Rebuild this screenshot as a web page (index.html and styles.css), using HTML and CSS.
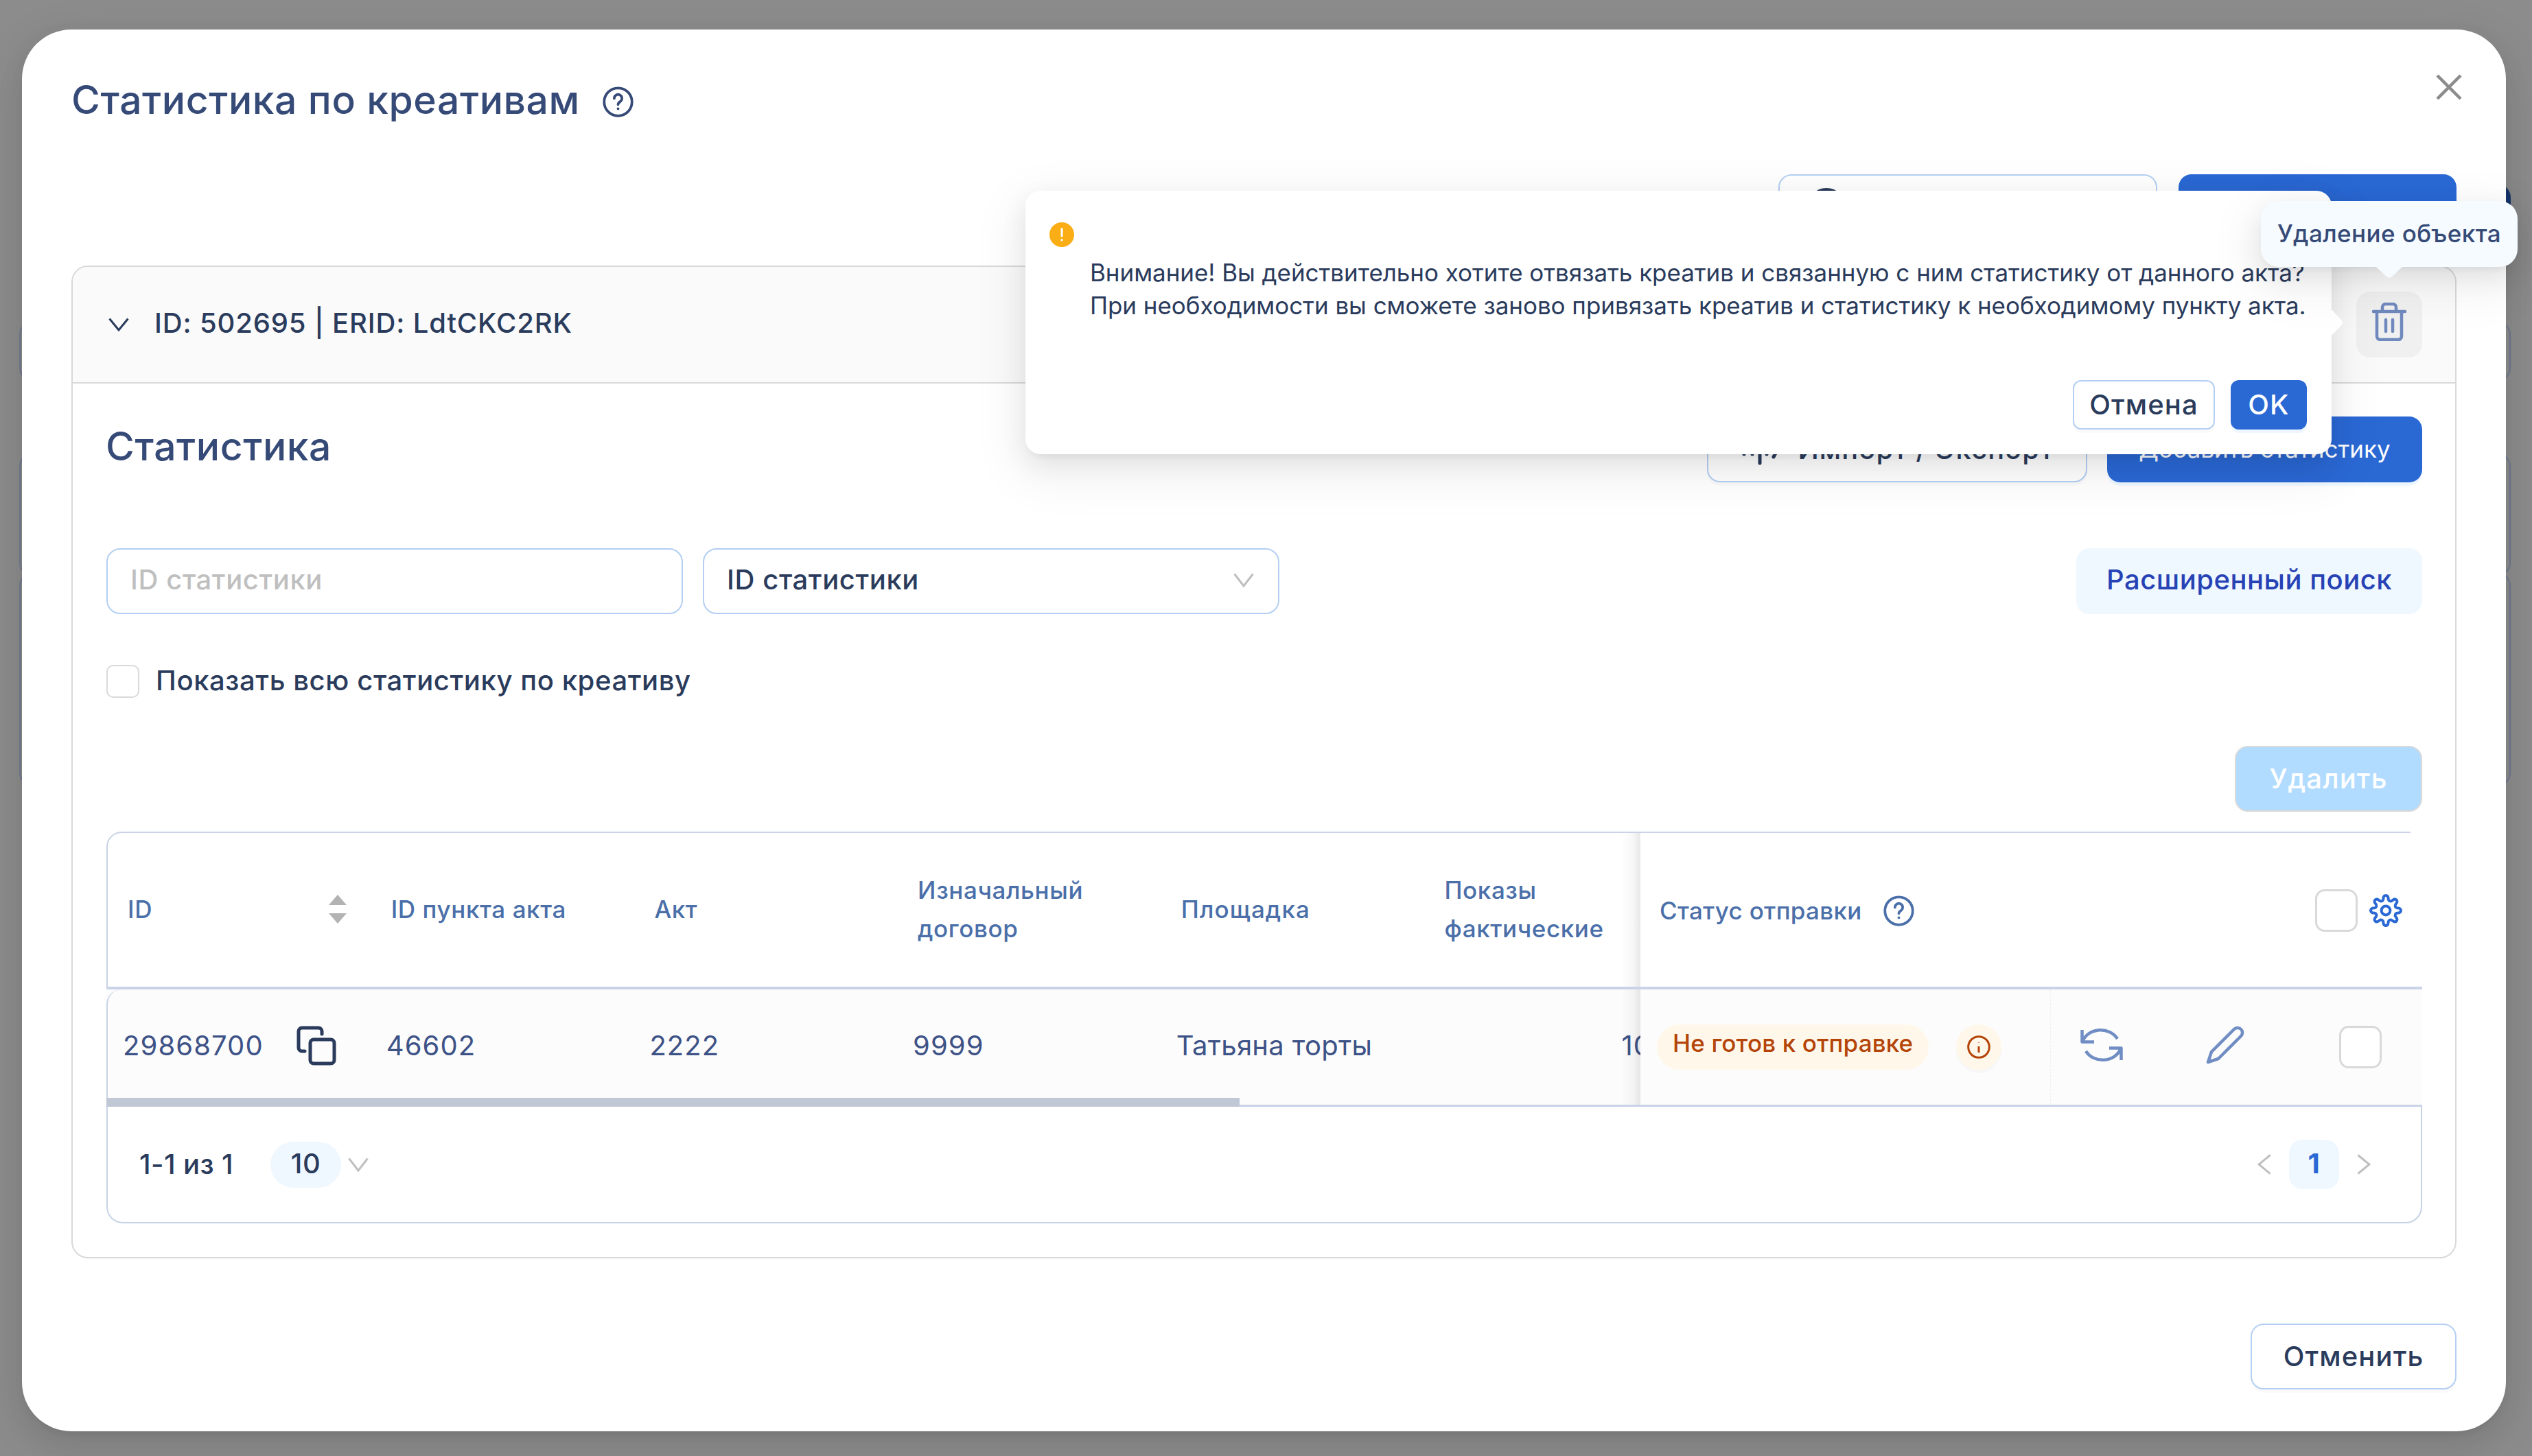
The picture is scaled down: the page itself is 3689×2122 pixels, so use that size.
FILE: index.html
```html
<!DOCTYPE html>
<html lang="ru">
<head>
  <meta charset="UTF-8">
  <meta name="viewport" content="width=device-width, initial-scale=1.0">
  <title>Статистика по креативам</title>
  <link rel="stylesheet" href="styles.css">
</head>
<body>
  <!-- затемнённая страница под окном -->
  <div class="page-behind">
    <div class="behind-box search"></div>
    <div class="behind-box table"></div>
    <div class="behind-box list"></div>
    <div class="behind-btn"></div>
  </div>

  <main class="modal">
    <button class="close">
      <svg width="38" height="38" viewBox="0 0 38 38"><path d="M2 2 36 36M36 2 2 36"/></svg>
    </button>

    <header class="modal-title">
      <h1>Статистика по креативам</h1>
      <svg class="help" width="45" height="45" viewBox="0 0 24 24">
        <circle cx="12" cy="12" r="10.8"/>
        <path d="M9 9.3a3 3 0 1 1 4.6 2.5c-1 .7-1.6 1.2-1.6 2.2"/>
        <path d="M12 17.2v.1"/>
      </svg>
    </header>

    <div class="actions">
      <button class="btn outline act-first">
        <svg width="56" height="56" viewBox="0 0 56 56"><circle cx="28" cy="28" r="25.5"/></svg>
      </button>
      <button class="btn primary act-second"></button>
    </div>

    <section class="card">
      <div class="card-head">
        <svg class="chevron dark" width="30" height="20" viewBox="0 0 30 20"><path d="M1.5 1.5 15 18 28.5 1.5"/></svg>
        <span class="card-name">ID: 502695 | ERID: LdtCKC2RK</span>
        <button class="trash">
          <svg width="50" height="56" viewBox="0 0 50 56">
            <path d="M2 13H48M7 13V49a5 5 0 0 0 5 5H38a5 5 0 0 0 5-5V13M15 13V7a5 5 0 0 1 5-5H30a5 5 0 0 1 5 5V13M20 25V42M30 25V42"/>
          </svg>
        </button>
      </div>

      <div class="card-body">
        <div class="stat-head">
          <h2>Статистика</h2>
          <button class="btn outline import">
            <svg width="58" height="48" viewBox="0 0 58 48"><path d="M5 14V31M17 22V31M28 4V44M38 22V31M55 22 48 35"/></svg>
            <span>Импорт / Экспорт</span>
          </button>
          <button class="btn primary add"><span>Добавить статистику</span></button>
        </div>

        <div class="filters">
          <div class="field placeholder"><span>ID статистики</span></div>
          <div class="field">
            <span>ID статистики</span>
            <svg class="chevron" width="30" height="21" viewBox="0 0 30 21"><path d="M1.5 1.5 15 19 28.5 1.5"/></svg>
          </div>
          <button class="btn soft"><span>Расширенный поиск</span></button>
        </div>

        <label class="show-all">
          <span class="check small"></span>
          <span class="show-all-text">Показать всю статистику по креативу</span>
        </label>

        <div class="bulk">
          <button class="btn disabled"><span>Удалить</span></button>
        </div>

        <div class="grid">
          <div class="row head">
            <div class="cells">
              <div class="cell">
                <span>ID</span>
                <svg class="sorter" width="26" height="42" viewBox="0 0 26 42"><path d="M13 0 26 15H0zM13 42 26 27H0z"/></svg>
              </div>
              <div class="cell">ID пункта акта</div>
              <div class="cell">Акт</div>
              <div class="cell"><span>Изначальный<br>договор</span></div>
              <div class="cell place">Площадка</div>
              <div class="cell"><span>Показы<br>фактические</span></div>
            </div>
            <div class="pinned">
              <div class="status">
                <span>Статус отправки</span>
                <svg class="help" width="45" height="45" viewBox="0 0 24 24">
                  <circle cx="12" cy="12" r="10.8"/>
                  <path d="M9 9.3a3 3 0 1 1 4.6 2.5c-1 .7-1.6 1.2-1.6 2.2"/>
                  <path d="M12 17.2v.1"/>
                </svg>
              </div>
              <div class="head-tools">
                <span class="check"></span>
                <svg class="gear" width="48" height="48" viewBox="0 0 24 24">
                  <path d="M10.300 2.700a1.700 1.700 0 0 1 3.400 0l.2 1.200a1.600 1.600 0 0 0 2.500 1l1-.7a1.700 1.700 0 0 1 2.400 2.400l-.7 1a1.600 1.600 0 0 0 1 2.500l1.200.2a1.700 1.700 0 0 1 0 3.400l-1.200.2a1.600 1.600 0 0 0-1 2.500l.7 1a1.700 1.700 0 0 1-2.400 2.400l-1-.7a1.600 1.600 0 0 0-2.500 1l-.2 1.200a1.700 1.700 0 0 1-3.400 0l-.2-1.200a1.600 1.600 0 0 0-2.500-1l-1 .7a1.700 1.700 0 0 1-2.400-2.400l.7-1a1.600 1.600 0 0 0-1-2.500l-1.200-.2a1.700 1.700 0 0 1 0-3.400l1.200-.2a1.600 1.600 0 0 0 1-2.500l-.7-1a1.700 1.700 0 0 1 2.400-2.400l1 .7a1.600 1.600 0 0 0 2.500-1z"/>
                  <circle cx="12" cy="12" r="3.2"/>
                </svg>
              </div>
            </div>
          </div>

          <div class="row data">
            <div class="cells">
              <div class="cell">
                <span>29868700</span>
                <svg class="copy" width="58" height="58" viewBox="0 0 58 58">
                  <path d="M12 37H8a5 5 0 0 1-5-5V8a5 5 0 0 1 5-5H32a5 5 0 0 1 5 5V12"/>
                  <rect x="20" y="20" width="35" height="35" rx="5"/>
                </svg>
              </div>
              <div class="cell">46602</div>
              <div class="cell">2222</div>
              <div class="cell">9999</div>
              <div class="cell place">Татьяна торты</div>
              <div class="cell shows">10</div>
            </div>
            <div class="pinned">
              <div class="status">
                <span class="tag">Не готов к отправке</span>
                <button class="info">
                  <svg width="34" height="34" viewBox="0 0 34 34"><circle cx="17" cy="17" r="15.3"/><path d="M17 16V25M17 10V10.5"/></svg>
                </button>
              </div>
              <div class="tool refresh">
                <svg width="62" height="52" viewBox="0 0 62 52">
                  <path d="M2.5 4V21.5H20M3.500 20A28 25 0 0 1 54 17"/>
                  <path d="M59.5 48V30.5H42M58.500 32A28 25 0 0 1 8 35"/>
                </svg>
              </div>
              <div class="tool edit">
                <svg width="56" height="56" viewBox="0 0 56 56"><path d="M41 5a7 7 0 0 1 10 10L18 48 3 53 8 38z"/></svg>
              </div>
              <div class="tool pick"><span class="check"></span></div>
            </div>
          </div>
          <div class="scrollbar"></div>

          <div class="pager">
            <span class="total">1-1 из 1</span>
            <span class="size">10</span>
            <svg class="chevron" width="30" height="21" viewBox="0 0 30 21"><path d="M1.5 1.5 15 19 28.5 1.5"/></svg>
            <div class="pages">
              <svg class="chevron" width="20" height="30" viewBox="0 0 20 30"><path d="M18.5 1.5 2 15 18.5 28.5"/></svg>
              <span class="page">1</span>
              <svg class="chevron" width="20" height="30" viewBox="0 0 20 30"><path d="M1.5 1.5 18 15 1.5 28.5"/></svg>
            </div>
          </div>
        </div>
      </div>
    </section>

    <footer class="modal-foot">
      <button class="btn outline cancel"><span>Отменить</span></button>
    </footer>
  </main>

  <!-- подтверждение удаления -->
  <div class="popconfirm">
    <svg class="warn" width="36" height="36" viewBox="0 0 36 36">
      <circle cx="18" cy="18" r="18"/>
      <path d="M18 9.5V20M18 25.5V26"/>
    </svg>
    <p>Внимание! Вы действительно хотите отвязать креатив и связанную с ним статистику от данного акта?<br>При необходимости вы сможете заново привязать креатив и статистику к необходимому пункту акта.</p>
    <div class="popconfirm-buttons">
      <button class="btn outline no"><span>Отмена</span></button>
      <button class="btn primary ok"><span>OK</span></button>
    </div>
  </div>
  <div class="tooltip">Удаление объекта</div>
</body>
</html>
```
FILE: styles.css
```css
:root {
  --ink: #2a3b5c;
  --title: #364a77;
  --blue: #2a68d4;
  --line: #d9d9d9;
  --table-line: #c8d3e7;
  --field-line: #b4cff3;
  --icon: #708dc4;
}
* {
  box-sizing: border-box;
}
body {
  margin: 0;
  height: 2122px;
  padding: 43px 38px 36px 32px;
  background: #8c8c8c;
  color: var(--ink);
  font: 500 40px/48px Inter, "Noto Sans", sans-serif;
  letter-spacing: 0.6px;
  overflow: hidden;
}
h1, h2, p {
  margin: 0;
}
svg {
  display: block;
  flex: none;
  fill: none;
  stroke: currentColor;
}
button {
  border: 0;
  padding: 0;
  background: none;
  color: inherit;
  font: inherit;
  letter-spacing: inherit;
}

/* страница под окном */
.behind-box {
  position: absolute;
  left: 28px;
  width: 3630px;
  border: 2px solid #6e7890;
  border-radius: 20px;
}
.behind-box.search {
  top: 468px;
  height: 88px;
}
.behind-box.table {
  top: 660px;
  height: 180px;
}
.behind-box.list {
  top: 834px;
  height: 312px;
}
.behind-btn {
  position: absolute;
  left: 3400px;
  top: 268px;
  width: 258px;
  height: 96px;
  border-radius: 20px;
  background: #17376f;
}

/* окно */
.modal {
  position: relative;
  height: 2043px;
  padding: 72px 72px 0;
  background: #fff;
  border-radius: 72px;
  box-shadow: 0 14px 38px rgba(0, 0, 0, 0.08), 0 7px 14px -9px rgba(0, 0, 0, 0.12), 0 22px 67px 19px rgba(0, 0, 0, 0.05);
}
.close {
  position: absolute;
  top: 65px;
  right: 64px;
  color: #8c8c8c;
}
.close svg {
  stroke-width: 4.5;
}
.modal-title {
  display: flex;
  align-items: center;
  gap: 33px;
  height: 61px;
  margin-bottom: 78px;
  color: var(--title);
}
h1, h2 {
  font-size: 57px;
  font-weight: 500;
  line-height: 61px;
}
.help {
  position: relative;
  top: 3px;
  stroke-width: 2;
  stroke-linecap: round;
}
.actions {
  display: flex;
  justify-content: flex-end;
  gap: 31px;
  margin-bottom: 37px;
}

/* кнопки */
.btn {
  display: flex;
  align-items: center;
  justify-content: center;
  height: 96px;
  border-radius: 19px;
  letter-spacing: 1.1px;
  white-space: nowrap;
}
.btn.outline {
  background: #fff;
  border: 2px solid var(--field-line);
  box-shadow: 0 5px 0 rgba(0, 0, 0, 0.02);
}
.btn.primary {
  background: var(--blue);
  color: #fff;
  box-shadow: 0 5px 0 #eef7ff;
}
.btn.soft {
  width: 504px;
  margin-left: auto;
  padding-bottom: 4px;
  background: #eff7ff;
  color: #2742b4;
  letter-spacing: 0.5px;
}
.btn.disabled {
  width: 273px;
  background: #b2dcff;
  border: 2px solid var(--line);
  color: #fff;
}
.act-first {
  width: 552px;
  justify-content: flex-start;
  padding-left: 40px;
}
.act-first svg {
  stroke-width: 5;
}
.act-second {
  width: 405px;
}

/* карточка */
.card {
  height: 1447px;
  border: 2px solid var(--line);
  border-radius: 24px;
  overflow: hidden;
}
.card-head {
  display: flex;
  align-items: center;
  height: 170px;
  padding: 0 48px 0 52px;
  background: #fafafa;
  border-bottom: 2px solid var(--line);
}
.chevron {
  color: #bfbfbf;
  stroke-width: 3;
}
.chevron.dark {
  color: var(--ink);
}
.card-name {
  margin-left: 37px;
  padding-bottom: 4px;
  letter-spacing: 0.85px;
}
.trash {
  display: flex;
  align-items: center;
  justify-content: center;
  width: 96px;
  height: 96px;
  margin-left: auto;
  padding-bottom: 8px;
  border-radius: 20px;
  background: rgba(0, 0, 0, 0.04);
  color: #7089be;
}
.trash svg {
  stroke-width: 4.5;
  stroke-linecap: round;
}
.card-body {
  padding: 48px 48px 0 49px;
}
.stat-head {
  display: flex;
  align-items: center;
}
h2 {
  margin-left: -1px;
  padding-bottom: 9px;
  color: var(--title);
}
.import {
  width: 554px;
  margin-left: auto;
  gap: 26px;
}
.import svg {
  stroke-width: 5;
  stroke-linecap: round;
}
.btn.add {
  width: 459px;
  margin-left: 29px;
  padding-bottom: 2px;
  font-size: 35px;
  font-weight: 400;
  letter-spacing: 0;
}

/* фильтры */
.filters {
  display: flex;
  margin-top: 96px;
}
.field {
  display: flex;
  align-items: center;
  justify-content: space-between;
  width: 840px;
  height: 96px;
  margin-right: 29px;
  padding: 0 35px 4px 33px;
  border: 2px solid var(--field-line);
  border-radius: 20px;
}
.field.placeholder {
  color: #bfbfbf;
}
.show-all {
  display: flex;
  align-items: center;
  gap: 24px;
  height: 48px;
  margin-top: 74px;
}
.show-all-text {
  padding-bottom: 3px;
}
.check {
  flex: none;
  width: 62px;
  height: 62px;
  border: 3px solid var(--line);
  border-radius: 14px;
  background: #fff;
}
.check.small {
  width: 48px;
  height: 48px;
  border-width: 2px;
  border-radius: 10px;
}
.bulk {
  display: flex;
  justify-content: flex-end;
  margin: 70px 0 29px;
}

/* таблица */
.grid {
  position: relative;
}
.row {
  display: flex;
}
.cells {
  position: relative;
  display: grid;
  grid-template-columns: repeat(6, 383.7px);
  width: 2235px;
  overflow: hidden;
  border-left: 2px solid var(--table-line);
}
.cells::after {
  content: '';
  position: absolute;
  top: 0;
  right: 0;
  width: 28px;
  height: 100%;
  background: linear-gradient(to left, rgba(0, 0, 0, 0.09), rgba(0, 0, 0, 0.03) 40%, transparent);
}
.cell {
  display: flex;
  align-items: center;
  white-space: nowrap;
}
.pinned {
  display: flex;
  width: 1139px;
}
.row.head {
  height: 230px;
  font-size: 35px;
  line-height: 56px;
  color: #4a6fa9;
  border-bottom: 4px solid var(--table-line);
}
.row.head .cells {
  border-top: 2px solid var(--table-line);
  border-top-left-radius: 22px;
}
.row.head .cells .cell {
  padding: 0 0 3px 29px;
}
.row.head .pinned {
  background: linear-gradient(var(--table-line), var(--table-line)) no-repeat 0 0 / 1122px 2px;
}
.row.head .place {
  letter-spacing: 1.1px;
}
.sorter {
  margin-left: auto;
  margin-right: 36px;
  fill: #b3b3b3;
  stroke: none;
}
.status {
  display: flex;
  align-items: center;
  width: 598px;
  padding-left: 28px;
  letter-spacing: 0.3px;
  white-space: nowrap;
}
.status .help {
  margin-left: 31px;
  top: 1px;
}
.row.head .status, .head-tools {
  padding-top: 3px;
}
.head-tools {
  display: flex;
  align-items: center;
  gap: 17px;
  margin-left: auto;
  padding-right: 29px;
}
.gear {
  color: var(--blue);
  stroke-width: 2;
}
.row.data {
  height: 171px;
  background: #fcfcfc;
  border-bottom: 3px solid var(--table-line);
  color: #3d5286;
  font-weight: 400;
  letter-spacing: 1.1px;
}
.row.data .cells {
  border-top-left-radius: 22px;
}
.row.data .cells .cell {
  padding: 0 0 4px 22px;
}
.row.data .place {
  letter-spacing: 0.3px;
}
.copy {
  margin-left: 48px;
  color: var(--ink);
  stroke-width: 5;
  stroke-linecap: round;
}
.row.data .cells .shows {
  padding-left: 287px;
}
.row.data .status {
  padding: 0 0 0 24px;
  border-right: 1px dashed #f0f0f0;
}
.tag {
  width: 396px;
  height: 66px;
  padding-left: 23px;
  border-radius: 33px;
  background: #fff8ea;
  color: #b44408;
  font-size: 35px;
  font-weight: 500;
  letter-spacing: 0.15px;
  line-height: 54px;
}
.info {
  display: flex;
  align-items: center;
  justify-content: center;
  width: 66px;
  height: 66px;
  margin-left: 40px;
  border-radius: 50%;
  background: #fff8ea;
  color: #b44408;
  box-shadow: 0 5px 0 rgba(0, 0, 0, 0.02);
}
.info svg {
  stroke-width: 3;
}
.tool {
  display: flex;
  align-items: center;
  width: 180px;
  padding-bottom: 6px;
  color: var(--icon);
}
.tool svg {
  stroke-width: 4.5;
  stroke-linejoin: round;
}
.refresh {
  padding-left: 43px;
}
.edit {
  padding-left: 46px;
}
.pick {
  padding: 0 0 0 60px;
}
.scrollbar {
  position: absolute;
  top: 388px;
  left: 0;
  width: 1651px;
  height: 13px;
  background: #c1c8d5;
}

/* пагинация */
.pager {
  display: flex;
  align-items: center;
  height: 170px;
  padding: 0 73px 0 46px;
  border: 2px solid var(--table-line);
  border-top: 0;
  border-radius: 0 0 24px 24px;
}
.total {
  letter-spacing: 0.4px;
}
.size {
  width: 103px;
  height: 67px;
  margin: 0 10px 0 54px;
  border-radius: 34px;
  background: #eff7ff;
  line-height: 63px;
  text-align: center;
}
.pages {
  display: flex;
  align-items: center;
  gap: 26px;
  margin-left: auto;
}
.page {
  width: 73px;
  height: 72px;
  border-radius: 20px;
  background: #eff7ff;
  color: var(--blue);
  font-weight: 700;
  line-height: 69px;
  text-align: center;
}
.modal-foot {
  display: flex;
  justify-content: flex-end;
  margin-top: 95px;
}
.cancel {
  width: 300px;
}

/* всплывающее подтверждение */
.popconfirm {
  position: absolute;
  top: 278px;
  left: 1494px;
  width: 1903px;
  height: 384px;
  padding: 46px 36px 0 35px;
  border-radius: 22px;
  background: #fff;
  box-shadow: 0 14px 38px rgba(0, 0, 0, 0.08), 0 7px 14px -9px rgba(0, 0, 0, 0.12), 0 22px 67px 19px rgba(0, 0, 0, 0.05);
}
.popconfirm::after {
  content: '';
  position: absolute;
  top: 172px;
  right: -16px;
  width: 17px;
  height: 40px;
  background: #fff;
  clip-path: polygon(0 0, 90% 40%, 100% 50%, 90% 60%, 0 100%);
}
.warn {
  stroke: #fff;
  stroke-width: 3;
  stroke-linecap: round;
}
.warn circle {
  fill: #faad14;
  stroke: none;
}
.popconfirm p {
  margin: 13px 0 0 59px;
  font-size: 35px;
  font-weight: 400;
  letter-spacing: -0.04px;
  white-space: nowrap;
}
.popconfirm-buttons {
  display: flex;
  justify-content: flex-end;
  gap: 23px;
  margin-top: 85px;
}
.popconfirm .btn {
  height: 72px;
  border-radius: 12px;
}
.no {
  width: 207px;
}
.ok {
  width: 111px;
}

/* подсказка */
.tooltip {
  position: absolute;
  top: 293px;
  left: 3294px;
  width: 374px;
  height: 96px;
  border-radius: 26px;
  background: #f5fbff;
  box-shadow: 0 14px 38px rgba(0, 0, 0, 0.08), 0 7px 14px -9px rgba(0, 0, 0, 0.12), 0 22px 67px 19px rgba(0, 0, 0, 0.05);
  color: var(--title);
  font-size: 35px;
  letter-spacing: 0.4px;
  line-height: 95px;
  text-align: center;
  white-space: nowrap;
}
.tooltip::after {
  content: '';
  position: absolute;
  top: 95px;
  left: 167px;
  width: 40px;
  height: 17px;
  background: #f5fbff;
  clip-path: polygon(0 0, 40% 90%, 50% 100%, 60% 90%, 100% 0);
}
```
